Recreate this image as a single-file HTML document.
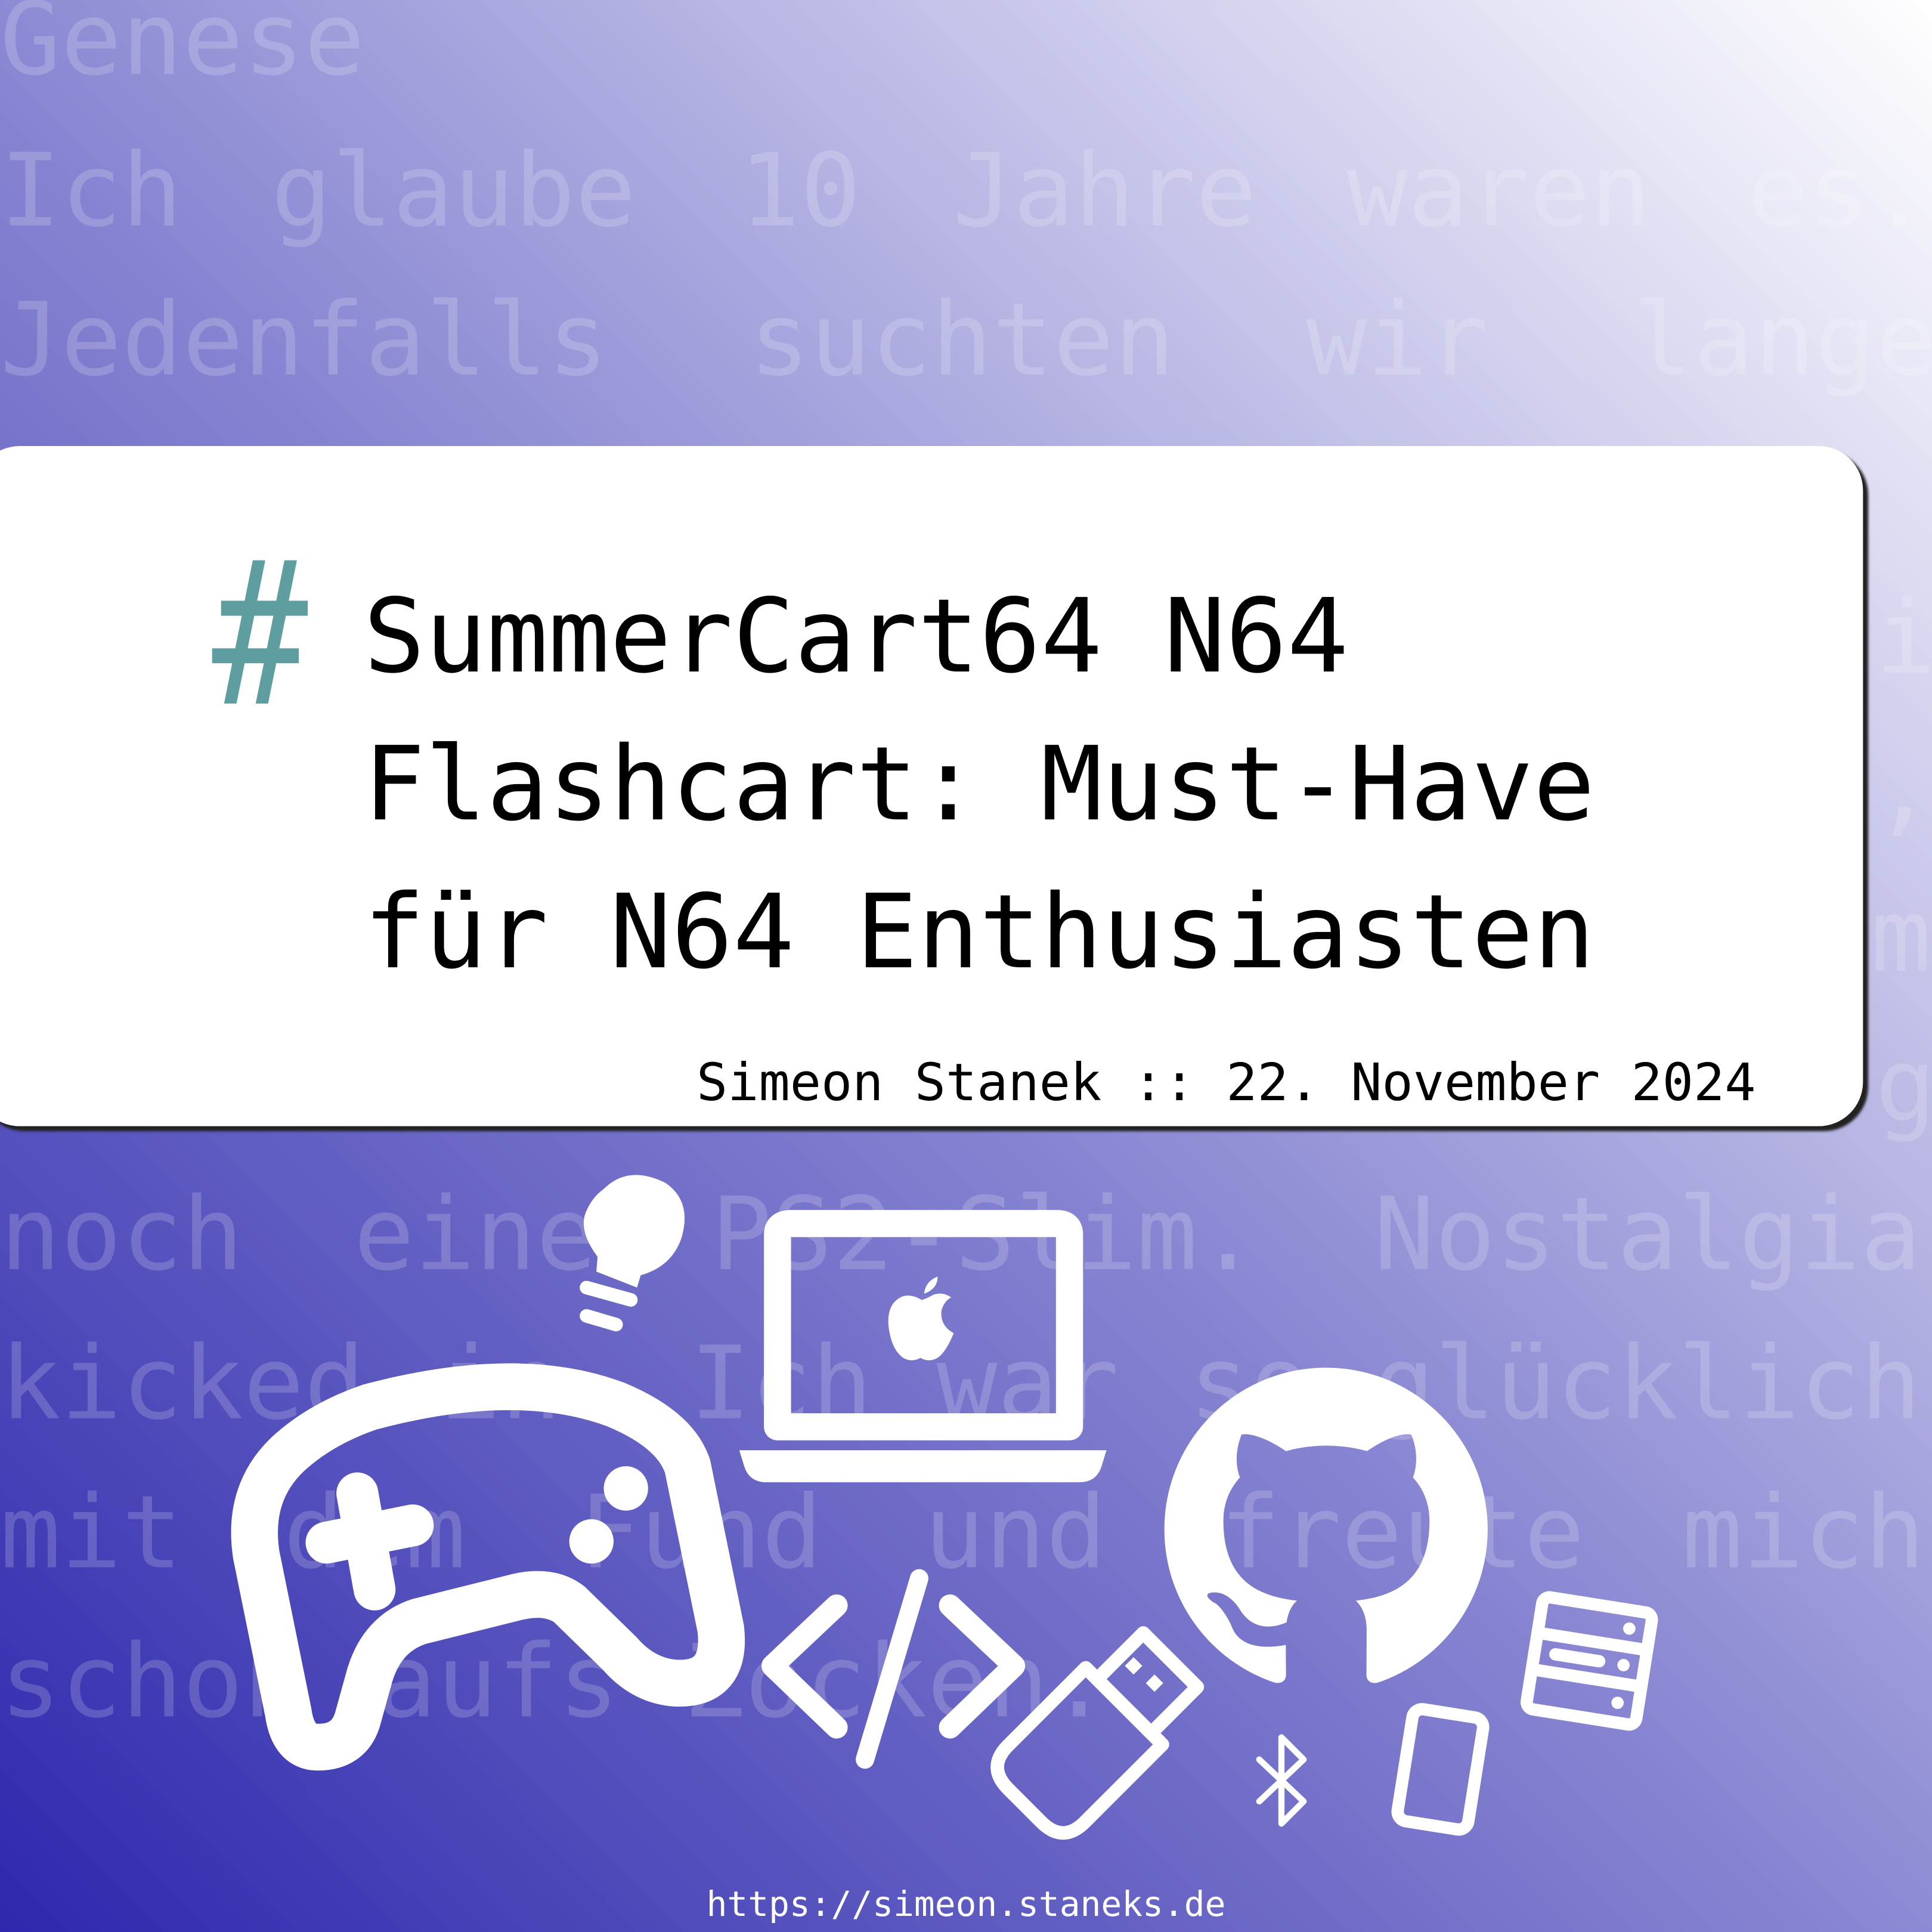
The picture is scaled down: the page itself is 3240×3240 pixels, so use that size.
<!DOCTYPE html>
<html><head><meta charset="utf-8">
<style>
html,body{margin:0;padding:0;width:3240px;height:3240px;overflow:hidden}
#s{position:absolute;left:0;top:0;width:1568px;height:1568px;transform:scale(2.066327);transform-origin:0 0;overflow:hidden;
background:linear-gradient(to top right,#2d28ad 0%,#8886d2 48%,#ffffff 100%);font-family:"DejaVu Sans Mono","Liberation Mono",monospace}
.bg span{position:absolute;font-size:82px;color:rgba(255,255,255,0.18);white-space:nowrap;line-height:1}
.card{position:absolute;left:-20px;top:362px;width:1532px;height:552px;background:#fff;border-radius:36px;box-shadow:4px 4px 2px #222}
.hash{position:absolute;left:172px;top:435px;font-size:162px;color:#5f9ea0;line-height:1;transform:scaleX(0.8);transform-origin:0 0}
.t{position:absolute;left:295px;font-size:83px;color:#000;line-height:1;white-space:nowrap}
.au{position:absolute;right:143px;top:858px;font-size:42px;color:#000;white-space:nowrap;line-height:1}
.url{position:absolute;left:0;width:1568px;text-align:center;top:1532px;font-size:28px;color:#fff;line-height:1}
</style></head><body>
<div id="s">
<div class="bg">
<span style="left:0;top:-8px">Genese</span>
<span style="left:0;top:115px">Ich</span><span style="left:220px;top:115px">glaube</span><span style="left:600px;top:115px">10</span><span style="left:773px;top:115px">Jahre</span><span style="left:1093px;top:115px">waren</span><span style="left:1418px;top:115px">es.</span>
<span style="left:0;top:236px">Jedenfalls</span><span style="left:608px;top:236px">suchten</span><span style="left:1060px;top:236px">wir</span><span style="left:1325px;top:236px">lange</span>
<span style="left:0;top:357px">nach</span>
<span style="left:1522px;top:478px">i</span>
<span style="left:1520px;top:599px">,</span>
<span style="left:1518px;top:720px">m</span>
<span style="left:1522px;top:841px">g</span>
<span style="left:0;top:962px">noch</span><span style="left:287px;top:962px">eine</span><span style="left:577px;top:962px">PS2-Slim.</span><span style="left:1115px;top:962px">Nostalgia</span>
<span style="left:0;top:1083px">kicked</span><span style="left:357px;top:1083px">in.</span><span style="left:560px;top:1083px">Ich</span><span style="left:760px;top:1083px">war</span><span style="left:965px;top:1083px">so</span><span style="left:1115px;top:1083px">glücklich</span>
<span style="left:0;top:1204px">mit</span><span style="left:230px;top:1204px">dem</span><span style="left:470px;top:1204px">Fund</span><span style="left:750px;top:1204px">und</span><span style="left:990px;top:1204px">freute</span><span style="left:1365px;top:1204px">mich</span>
<span style="left:0;top:1325px">schon</span><span style="left:305px;top:1325px">aufs</span><span style="left:555px;top:1325px">Zocken.</span>
</div>

<div class="card"></div>
<div class="hash">#</div>
<div class="t" style="top:475px">SummerCart64 N64</div>
<div class="t" style="top:595px">Flashcart: Must-Have</div>
<div class="t" style="top:715px">für N64 Enthusiasten</div>
<div class="au">Simeon Stanek :: 22. November 2024</div>

<svg width="1568" height="1568" style="position:absolute;left:0;top:0" viewBox="0 0 1568 1568">
<g fill="none" stroke="#fff" stroke-linecap="round" stroke-linejoin="round">
 <path d="M300 1142 Q420 1110 500 1140 Q548 1160 558 1190 L585 1322 Q590 1368 548 1366 Q522 1364 503 1342 L462 1302 Q446 1290 420 1296 L340 1316 Q310 1326 300 1360 L290 1396 Q283 1418 258 1418 Q238 1418 234 1390 L208 1262 Q200 1210 236 1178 Q262 1155 300 1142 Z" stroke-width="38"/>
 <path d="M265 1252 L335 1238 M290 1212 L304 1290" stroke-width="34"/>
 <path d="M476 1045 L512 1055 M476 1068 L500 1075" stroke-width="11"/>
 <path d="M631 1158 L631 1002 Q631 993 642 993 L858 993 Q868 993 868 1002 L868 1158 Z" stroke-width="22"/>
 <path d="M679 1303 L627 1352 L679 1402 M771 1303 L823 1352 L771 1402" stroke-width="18"/>
 <path d="M746 1281 L702 1428" stroke-width="15"/>
 <g transform="translate(872,1425) rotate(45)" stroke-width="11">
  <path d="M-44 -57 L44 -57 L44 32 Q44 57 19 57 L-19 57 Q-44 57 -44 32 Z"/>
  <rect x="-31" y="-110" width="62" height="53"/>
 </g>
 <path d="M1022 1428 L1058 1462 L1040 1480 L1040 1410 L1058 1428 L1022 1462" stroke-width="5"/>
 <rect x="1140" y="1390" width="58" height="92" rx="8" transform="rotate(9 1169 1436)" stroke-width="10"/>
 <g transform="rotate(9 1290 1347)" stroke-width="10">
  <rect x="1245" y="1302" width="90" height="92" rx="6"/>
  <path d="M1245 1332 L1335 1332 M1245 1362 L1335 1362 M1262 1347 L1298 1347"/>
 </g>
</g>
<g fill="#fff">
 <circle cx="508" cy="1208" r="18"/>
 <circle cx="480" cy="1251" r="18"/>
 <path d="M490 965 Q510 945 540 960 Q562 975 553 1005 Q545 1028 520 1035 L517 1045 L484 1032 L485 1020 Q470 1000 475 985 Q480 972 490 965 Z"/>
 <path d="M600 1177 L898 1177 L894 1190 Q890 1203 876 1203 L622 1203 Q608 1203 604 1190 Z"/>
 <path d="M748 1055 Q740 1050 733 1052 Q720 1057 721 1075 Q723 1095 733 1102 Q740 1106 747 1102 Q754 1106 761 1102 Q768 1097 774 1082 Q763 1076 764 1064 Q766 1056 772 1053 Q765 1048 757 1051 Q752 1054 748 1055 Z M750 1050 Q751 1040 761 1036 Q761 1046 750 1050 Z"/>
 <g transform="rotate(9 1290 1347)">
  <circle cx="1318" cy="1317" r="5"/><circle cx="1318" cy="1347" r="5"/><circle cx="1318" cy="1378" r="5"/>
 </g>
 <rect x="915" y="1347" width="10" height="10" transform="rotate(45 920 1352)"/>
 <rect x="932" y="1361" width="10" height="10" transform="rotate(45 937 1366)"/>
 <g transform="translate(945,1110) scale(16.4)">
  <path fill-rule="evenodd" d="M8 0C3.58 0 0 3.58 0 8c0 3.54 2.29 6.53 5.47 7.59.4.07.55-.17.55-.38 0-.19-.01-.82-.01-1.49-2.01.37-2.53-.49-2.69-.94-.09-.23-.48-.94-.82-1.13-.28-.15-.68-.52-.01-.53.63-.01 1.08.58 1.23.82.72 1.21 1.87.87 2.33.66.07-.52.28-.87.51-1.07-1.78-.2-3.64-.89-3.64-3.95 0-.87.31-1.59.82-2.15-.08-.2-.36-1.02.08-2.12 0 0 .67-.21 2.2.82.64-.18 1.32-.27 2-.27.68 0 1.36.09 2 .27 1.53-1.04 2.2-.82 2.2-.82.44 1.1.16 1.92.08 2.12.51.56.82 1.27.82 2.15 0 3.07-1.87 3.75-3.65 3.95.29.25.54.73.54 1.48 0 1.07-.01 1.93-.01 2.2 0 .21.15.46.55.38A8.013 8.013 0 0016 8c0-4.42-3.58-8-8-8z"/>
 </g>
</g>
</svg>
<div class="url">https://simeon.staneks.de</div>
</div>
</body></html>
